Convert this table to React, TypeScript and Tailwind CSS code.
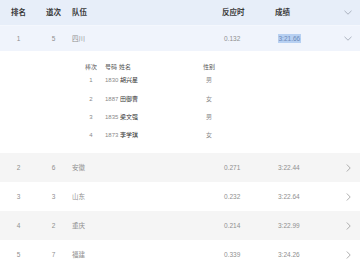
import React from "react";

const font = { fontFamily: '"Liberation Sans", "Noto Sans CJK SC", sans-serif' };

function ChevronDown() {
  return (
    <svg width="8" height="5" viewBox="0 0 8 5" fill="none">
      <path d="M0.5 0.8 L4 4.2 L7.5 0.8" stroke="#9aa3b0" strokeWidth="0.8" />
    </svg>
  );
}

function ChevronRight() {
  return (
    <svg width="5" height="8" viewBox="0 0 5 8" fill="none">
      <path d="M0.8 0.5 L4.2 4 L0.8 7.5" stroke="#9a9a9a" strokeWidth="0.8" />
    </svg>
  );
}

const rows = [
  { rank: "2", lane: "6", team: "安徽", rt: "0.271", res: "3:22.44" },
  { rank: "3", lane: "3", team: "山东", rt: "0.232", res: "3:22.64" },
  { rank: "4", lane: "2", team: "重庆", rt: "0.214", res: "3:22.99" },
  { rank: "5", lane: "7", team: "福建", rt: "0.339", res: "3:24.26" },
];

const members = [
  { n: "1", no: "1830", name: "胡兴星", sex: "男" },
  { n: "2", no: "1887", name: "田御曹", sex: "女" },
  { n: "3", no: "1835", name: "梁文强", sex: "男" },
  { n: "4", no: "1873", name: "李学琪", sex: "女" },
];

export default function App() {
  return (
    <div className="w-[360px] h-[266px] overflow-hidden bg-white" style={font}>
      {/* header */}
      <div className="flex items-center h-[25px] bg-[#e7eef9] text-[7.5px] font-semibold text-[#3a3a3a]">
        <div className="w-[37px] text-center">排名</div>
        <div className="w-[33px] text-center">道次</div>
        <div className="w-[152px] pl-[2px]">队伍</div>
        <div className="w-[53px]">反应时</div>
        <div className="flex-1">成绩</div>
        <div className="w-[16px] flex justify-start"><ChevronDown /></div>
      </div>
      {/* row 1 */}
      <div className="flex items-center h-[26px] bg-[#f0f4fc] border-t border-[#f4f7fd] text-[6.5px] text-[#8f8f8f]">
        <div className="w-[37px] text-center">1</div>
        <div className="w-[33px] text-center">5</div>
        <div className="w-[152px] pl-[2px]">四川</div>
        <div className="w-[56px] pl-[2px]">0.132</div>
        <div className="flex-1 flex"><span className="bg-[#b7d0f2] text-[#6d89b8] px-[0.5px]">3:21.66</span></div>
        <div className="w-[16px] flex justify-start"><ChevronDown /></div>
      </div>
      {/* expanded */}
      <div className="h-[102px] flex flex-col pt-[10px]">
        <div className="flex items-center h-[12px] text-[6px] text-[#555]">
          <div className="w-[84px]" />
          <div className="w-[14px] text-center">棒次</div>
          <div className="w-[7px]" />
          <div className="w-[14px]">号码</div>
          <div className="w-[15px]">姓名</div>
          <div className="w-[68px]" />
          <div className="w-[14px] text-center">性别</div>
        </div>
        {members.map((m, i) => (
          <div
            key={m.n}
            className={
              "flex items-center h-[12px] text-[6px] text-[#8a8a8a] " +
              (i === 0 ? "mt-[1px]" : i === 1 ? "mt-[7px]" : i === 2 ? "mt-[6.5px]" : "mt-[6px]")
            }
          >
            <div className="w-[84px]" />
            <div className="w-[14px] text-center">{m.n}</div>
            <div className="w-[7px]" />
            <div className="w-[14px]">{m.no}</div>
            <div className="w-[1px]" />
            <div className="w-[14px] text-[#333] whitespace-nowrap">{m.name}</div>
            <div className="w-[68px]" />
            <div className="w-[14px] text-center">{m.sex}</div>
          </div>
        ))}
      </div>
      {/* other rows */}
      {rows.map((r, i) => (
        <div
          key={r.rank}
          className={
            "flex items-center h-[29px] text-[6.5px] text-[#8f8f8f] " +
            (i % 2 === 0 ? "bg-[#f5f5f5]" : "bg-white")
          }
        >
          <div className="w-[37px] text-center">{r.rank}</div>
          <div className="w-[33px] text-center">{r.lane}</div>
          <div className="w-[152px] pl-[2px]">{r.team}</div>
          <div className="w-[56px] pl-[2px]">{r.rt}</div>
          <div className="flex-1">{r.res}</div>
          <div className="w-[14px] flex justify-start"><ChevronRight /></div>
        </div>
      ))}
    </div>
  );
}
